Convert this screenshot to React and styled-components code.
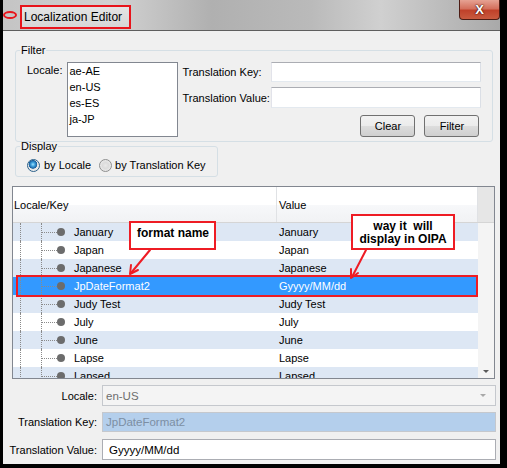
import React from "react";
import styled, { createGlobalStyle } from "styled-components";

const GlobalStyle = createGlobalStyle`
  html, body {
    margin: 0;
    padding: 0;
    background: #000;
  }
  body {
    font-family: "Liberation Sans", Arial, sans-serif;
    font-size: 11px;
    color: #000;
  }
`;

const Frame = styled.div`
  position: relative;
  width: 507px;
  height: 468px;
  box-sizing: border-box;
  padding: 0 7px 4px 3px;
  background: #000;
  overflow: hidden;
`;

const Window = styled.div`
  height: 100%;
  display: flex;
  flex-direction: column;
  background: #f0f0f0;
`;

const TitleBar = styled.div`
  flex: none;
  height: 30px;
  display: flex;
  align-items: flex-start;
  border-bottom: 1px solid #5e5e5e;
  background: linear-gradient(
    to right,
    #c4c4c4 0%,
    #d2d2d2 22%,
    #b0b0b0 42%,
    #bababa 62%,
    #d0d0d0 76%,
    #a9a9a9 100%
  );
`;

const Ellipse = styled.span`
  flex: none;
  margin-top: 11px;
  width: 14px;
  height: 8px;
  box-sizing: border-box;
  border: 2px solid #e8141b;
  border-radius: 50%;
`;

const TitleBox = styled.div`
  flex: none;
  margin: 5px 0 0 3px;
  width: 111px;
  height: 24px;
  box-sizing: border-box;
  border: 2px solid #e8141b;
  padding-left: 2px;
  display: flex;
  align-items: center;
  font-size: 12px;
  white-space: nowrap;
  background: linear-gradient(to bottom, #e4e4e4, #d6d6d6);
`;

const CloseButton = styled.div`
  margin-left: auto;
  width: 41px;
  height: 20px;
  box-sizing: border-box;
  border: 1px solid #4d1c14;
  border-top: none;
  border-radius: 0 0 4px 4px;
  background: linear-gradient(to bottom, #e6a293 0%, #d4705d 45%, #c0412a 55%, #c95a3f 100%);
  display: flex;
  align-items: center;
  justify-content: center;
  color: #fff;
  font-weight: bold;
  font-size: 13px;
  text-shadow: 0 0 2px #3a0c05, 0 0 1px #3a0c05;
`;

const Body = styled.div`
  flex: 1;
  display: flex;
  flex-direction: column;
  min-height: 0;
`;

const Group = styled.fieldset`
  margin: ${({ $top }) => $top}px 0 0 12px;
  width: ${({ $width }) => $width}px;
  box-sizing: border-box;
  padding: ${({ $pad }) => $pad};
  border: 1px solid #d5dfe5;
  border-radius: 3px;
  min-width: 0;
`;

const Legend = styled.legend`
  margin-left: -7px;
  padding: 0 1px;
  font-size: 11px;
  line-height: 12px;
`;

const FilterRow = styled.div`
  display: flex;
  align-items: flex-start;
`;

const LocaleLabel = styled.span`
  margin: 2px 5px 0 0;
  line-height: 13px;
`;

const ListBox = styled.div`
  flex: none;
  width: 111px;
  height: 75px;
  box-sizing: border-box;
  border: 1px solid #828790;
  background: #fff;
  padding-left: 1px;
`;

const ListItem = styled.div`
  height: 16px;
  line-height: 16px;
`;

const FieldColumn = styled.div`
  margin-left: 4px;
  width: 300px;
  display: flex;
  flex-direction: column;
`;

const FieldRow = styled.div`
  display: flex;
  align-items: center;
  margin-top: ${({ $gap }) => $gap || 0}px;
`;

const FieldLabel = styled.span`
  width: 89px;
  white-space: nowrap;
`;

const TextBox = styled.div`
  width: 210px;
  height: ${({ $h }) => $h}px;
  box-sizing: border-box;
  border: 1px solid #abadb3;
  border-color: #abadb3 #dbdfe6 #e3e9ef #e2e3ea;
  background: #fff;
`;

const ButtonRow = styled.div`
  margin-top: 7px;
  display: flex;
  justify-content: flex-end;
  gap: 9px;
  padding-right: 2px;
`;

const Button = styled.div`
  width: 55px;
  height: 22px;
  box-sizing: border-box;
  border: 1px solid #707070;
  border-radius: 3px;
  background: linear-gradient(to bottom, #f2f2f2 0%, #ebebeb 50%, #dddddd 51%, #cfcfcf 100%);
  display: flex;
  align-items: center;
  justify-content: center;
  font-size: 11px;
`;

const RadioRow = styled.div`
  display: flex;
  align-items: center;
  height: 14px;
`;

const Radio = styled.span`
  flex: none;
  width: 13px;
  height: 13px;
  box-sizing: border-box;
  border-radius: 50%;
  border: 1px solid ${({ $on }) => ($on ? "#2c628b" : "#8e8f8f")};
  background: ${({ $on }) =>
    $on
      ? "radial-gradient(circle at 45% 40%, #9fe1ff 0, #3c9fdc 2px, #1a5f9e 4px, #e6e6e6 4.6px, #f4f4f4 100%)"
      : "radial-gradient(circle at 50% 50%, #e9e9e9 0, #dcdcdc 3px, #f6f6f6 100%)"};
  margin-right: ${({ $gap }) => $gap}px;
`;

const RadioText = styled.span`
  margin-right: ${({ $gap }) => $gap || 0}px;
  white-space: nowrap;
`;

const Table = styled.div`
  position: relative;
  margin: 9px 5px 0 9px;
  height: 193px;
  flex: none;
  box-sizing: border-box;
  border: 1px solid #828790;
  background: #fff;
  display: flex;
  flex-direction: column;
  overflow: hidden;
`;

const Header = styled.div`
  flex: none;
  height: 36px;
  box-sizing: border-box;
  display: flex;
  border-bottom: 1px solid #d5d5d5;
  background: linear-gradient(to bottom, #ffffff 0%, #ffffff 50%, #f7f8fa 51%, #f1f2f4 100%);
`;

const HeaderCell = styled.div`
  width: ${({ $w }) => ($w ? `${$w}px` : "auto")};
  flex: ${({ $w }) => ($w ? "none" : "1")};
  box-sizing: border-box;
  padding-left: ${({ $pad }) => $pad}px;
  display: flex;
  align-items: center;
  border-right: 1px solid #e0e2e5;
`;

const HeaderCorner = styled.div`
  width: 16px;
  flex: none;
  background: #e6e6e6;
`;

const TableBody = styled.div`
  flex: 1;
  display: flex;
  min-height: 0;
`;

const Rows = styled.div`
  flex: 1;
  overflow: hidden;
`;

const Row = styled.div`
  height: 18px;
  flex: none;
  display: flex;
  align-items: stretch;
  background: ${({ $selected, $alt }) => ($selected ? "#3399ff" : $alt ? "#dde7f4" : "#ffffff")};
  color: ${({ $selected }) => ($selected ? "#fff" : "#000")};
`;

const KeyCell = styled.div`
  width: 264px;
  flex: none;
  display: flex;
  align-items: stretch;
  padding-left: 7px;
  box-sizing: border-box;
`;

const Guide = styled.span`
  width: 20px;
  flex: none;
  border-left: 1px dotted #8a8a8a;
`;

const Branch = styled.span`
  position: relative;
  width: 32px;
  flex: none;
  border-left: 1px dotted #8a8a8a;
  &::before {
    content: "";
    position: absolute;
    left: 0;
    top: 9px;
    width: 15px;
    border-top: 1px dotted #8a8a8a;
  }
  &::after {
    content: "";
    position: absolute;
    left: 15px;
    top: 5px;
    width: 8px;
    height: 8px;
    border-radius: 50%;
    background: #6c6c6c;
  }
`;

const CellText = styled.span`
  display: flex;
  align-items: center;
  font-size: 11px;
  white-space: nowrap;
  padding-left: ${({ $pad }) => $pad || 0}px;
`;

const ScrollTrack = styled.div`
  width: 16px;
  flex: none;
  background: #f4f4f4;
  display: flex;
  flex-direction: column;
  justify-content: flex-end;
  align-items: center;
  padding-bottom: 5px;
`;

const DownArrow = styled.span`
  width: 0;
  height: 0;
  border-left: 3px solid transparent;
  border-right: 3px solid transparent;
  border-top: 3px solid #5a5a5a;
`;

const Form = styled.div`
  display: flex;
  flex-direction: column;
  padding: 6px 4px 0 0;
`;

const FormRow = styled.div`
  display: flex;
  align-items: center;
  margin-top: ${({ $gap }) => $gap || 0}px;
`;

const FormLabel = styled.span`
  width: 94px;
  margin-right: 5px;
  text-align: right;
  white-space: nowrap;
  font-size: 11px;
`;

const FormField = styled.div`
  flex: 1;
  height: ${({ $h }) => $h}px;
  box-sizing: border-box;
  border: 1px solid ${({ $variant }) => ($variant === "value" ? "#abadb3" : "#c5c8cd")};
  background: ${({ $variant }) =>
    $variant === "key" ? "#b4cfec" : $variant === "value" ? "#fff" : "#f4f4f4"};
  color: ${({ $variant }) =>
    $variant === "key" ? "#7c8ea3" : $variant === "value" ? "#000" : "#6d6d6d"};
  display: flex;
  align-items: center;
  padding-left: ${({ $variant }) => ($variant === "value" ? 6 : 3)}px;
  font-size: 11.5px;
`;

const ComboArrow = styled.span`
  margin-left: auto;
  margin-right: 9px;
  width: 0;
  height: 0;
  border-left: 3px solid transparent;
  border-right: 3px solid transparent;
  border-top: 3px solid #a8a8a8;
`;

/* callouts drawn over the screenshot */
const Note = styled.div`
  position: absolute;
  left: ${({ $x }) => $x}px;
  top: ${({ $y }) => $y}px;
  width: ${({ $w }) => $w}px;
  height: ${({ $h }) => $h}px;
  box-sizing: border-box;
  border: 2px solid #ee1c24;
  background: #fff;
  font-weight: bold;
  font-size: 12px;
  line-height: 13px;
  white-space: nowrap;
  text-align: ${({ $center }) => ($center ? "center" : "left")};
  padding: ${({ $pad }) => $pad};
  color: #000;
`;

const Marker = styled.div`
  position: absolute;
  left: 16px;
  top: 275px;
  width: 462px;
  height: 22px;
  box-sizing: border-box;
  border: 2px solid #ee1c24;
`;

const ArrowLayer = styled.svg`
  position: absolute;
  left: 0;
  top: 0;
  pointer-events: none;
`;

const entries = [
  ["January", "January"],
  ["Japan", "Japan"],
  ["Japanese", "Japanese"],
  ["JpDateFormat2", "Gyyyy/MM/dd"],
  ["Judy Test", "Judy Test"],
  ["July", "July"],
  ["June", "June"],
  ["Lapse", "Lapse"],
  ["Lapsed", "Lapsed"],
];

export default function App() {
  return (
    <>
      <GlobalStyle />
      <Frame>
        <Window>
          <TitleBar>
            <Ellipse />
            <TitleBox>Localization Editor</TitleBox>
            <CloseButton>X</CloseButton>
          </TitleBar>
          <Body>
            <Group $top={13} $width={478} $pad="6px 11px 4px 11px">
              <Legend>Filter</Legend>
              <FilterRow>
                <LocaleLabel>Locale:</LocaleLabel>
                <ListBox>
                  {["ae-AE", "en-US", "es-ES", "ja-JP"].map((l) => (
                    <ListItem key={l}>{l}</ListItem>
                  ))}
                </ListBox>
                <FieldColumn>
                  <FieldRow>
                    <FieldLabel>Translation Key:</FieldLabel>
                    <TextBox $h={20} />
                  </FieldRow>
                  <FieldRow $gap={5}>
                    <FieldLabel>Translation Value:</FieldLabel>
                    <TextBox $h={21} />
                  </FieldRow>
                  <ButtonRow>
                    <Button>Clear</Button>
                    <Button>Filter</Button>
                  </ButtonRow>
                </FieldColumn>
              </FilterRow>
            </Group>
            <Group $top={-2} $width={203} $pad="6px 0 4px 11px">
              <Legend>Display</Legend>
              <RadioRow>
                <Radio $on $gap={4} />
                <RadioText $gap={8}>by Locale</RadioText>
                <Radio $gap={3} />
                <RadioText>by Translation Key</RadioText>
              </RadioRow>
            </Group>
            <Table>
              <Header>
                <HeaderCell $w={264} $pad={1}>Locale/Key</HeaderCell>
                <HeaderCell $pad={2}>Value</HeaderCell>
                <HeaderCorner />
              </Header>
              <TableBody>
                <Rows>
                  {entries.map(([key, value], i) => (
                    <Row key={key} $alt={i % 2 === 0} $selected={key === "JpDateFormat2"}>
                      <KeyCell>
                        <Guide />
                        <Branch />
                        <CellText>{key}</CellText>
                      </KeyCell>
                      <CellText $pad={2}>{value}</CellText>
                    </Row>
                  ))}
                </Rows>
                <ScrollTrack>
                  <DownArrow />
                </ScrollTrack>
              </TableBody>
            </Table>
            <Form>
              <FormRow>
                <FormLabel>Locale:</FormLabel>
                <FormField $h={21}>
                  en-US
                  <ComboArrow />
                </FormField>
              </FormRow>
              <FormRow $gap={6}>
                <FormLabel>Translation Key:</FormLabel>
                <FormField $h={20} $variant="key">JpDateFormat2</FormField>
              </FormRow>
              <FormRow $gap={7}>
                <FormLabel>Translation Value:</FormLabel>
                <FormField $h={21} $variant="value">Gyyyy/MM/dd</FormField>
              </FormRow>
            </Form>
          </Body>
        </Window>

        <Marker />
        <Note $x={129} $y={221} $w={87} $h={29} $pad="4px 0 0 6px">
          format name
        </Note>
        <Note $x={351} $y={214} $w={104} $h={36} $pad="4px 0 0 0" $center>
          way it &nbsp;will
          <br />
          display in OIPA
        </Note>
        <ArrowLayer width="507" height="468" viewBox="0 0 507 468">
          <g stroke="#ee1c24" strokeWidth="2" fill="none" strokeLinecap="round">
            <path d="M150 250 L131 273" />
            <path d="M130 274 L131 265 M130 274 L138 270" />
            <path d="M366 250 L352 277" />
            <path d="M351 278 L351 269 M351 278 L358 273" />
          </g>
        </ArrowLayer>
      </Frame>
    </>
  );
}
